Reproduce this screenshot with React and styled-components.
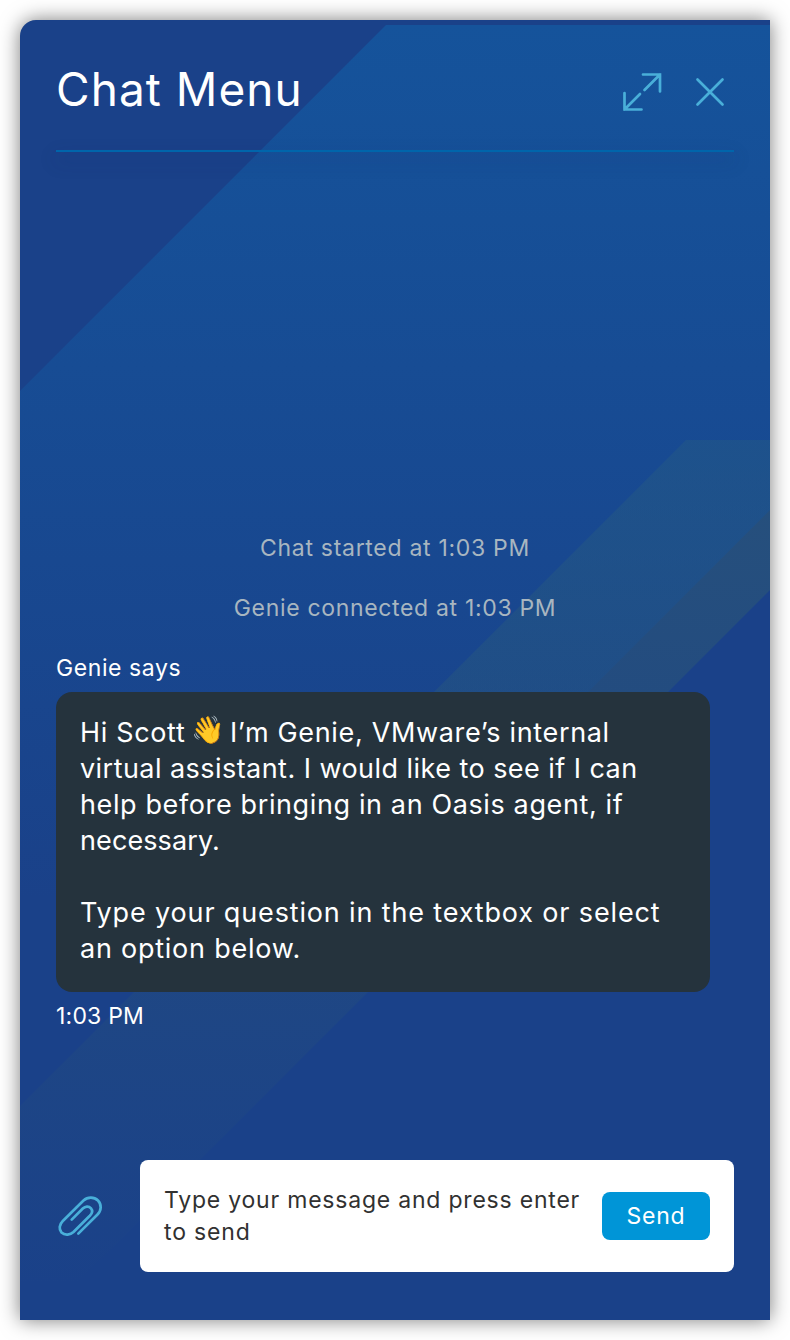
import React from "react";
import styled, { createGlobalStyle } from "styled-components";

const GlobalStyle = createGlobalStyle`
  *, *::before, *::after { box-sizing: border-box; }
  body { margin: 0; background: #fff; font-family: Inter, "Liberation Sans", sans-serif; }
  h1, p { margin: 0; font-weight: inherit; }
`;

const Page = styled.main`
  width: 790px;
  height: 1340px;
  padding: 20px;
  overflow: hidden;
`;

const Panel = styled.section`
  position: relative;
  isolation: isolate;
  display: flex;
  flex-direction: column;
  height: 1300px;
  padding: 0 36px 48px;
  border-radius: 16px 0 0 0;
  background: #1a4189;
  box-shadow: 0 0 20px rgba(0, 0, 0, 0.52);
  color: #fff;
`;

const Backdrop = styled.svg`
  position: absolute;
  inset: 0;
  z-index: -1;
`;

const Header = styled.header`
  display: flex;
  align-items: center;
  height: 130px;
  padding-top: 10px;
`;

const Divider = styled.div`
  height: 2px;
  background: #0065ab;
  box-shadow: 0 8px 18px 2px rgba(24, 44, 100, 0.17);
`;

const Title = styled.h1`
  flex: 1;
  font-size: 46px;
  font-weight: 400;
  line-height: 56px;
  padding-bottom: 2px;
  white-space: nowrap;
`;

const IconButton = styled.button`
  display: flex;
  padding: 0;
  border: 0;
  background: none;
  color: #49afd9;
`;

const HeaderActions = styled.div`
  display: flex;
  align-items: center;
  gap: 32px;
  padding: 4px 8px 0 0;
`;

const Log = styled.div`
  flex: 1;
  display: flex;
  flex-direction: column;
  padding-top: 378px;
`;

const Line = styled.span`
  display: block;
  width: max-content;
  white-space: nowrap;
  letter-spacing: ${(p) => p.$track || 0}px;
`;

const Emoji = styled.span`
  display: inline-block;
  height: 36px;
  margin: 0 -3px 0 -3px;
  line-height: 30px;
  letter-spacing: 0;
  vertical-align: top;
`;

const Notice = styled.p`
  display: flex;
  justify-content: center;
  height: 60px;
  color: #a8b6c0;
  font-size: 23px;
  line-height: 36px;
`;

const Meta = styled.p`
  font-size: 23px;
  line-height: 36px;
`;

const Bubble = styled.div`
  width: 654px;
  height: 300px;
  margin: 6px 0;
  padding: 23px 24px;
  border-radius: 16px;
  background: #25333d;
  font-size: 27px;
  line-height: 36px;
`;

const Paragraph = styled.p`
  & + & { margin-top: 36px; }
`;

const Composer = styled.footer`
  display: flex;
  align-items: center;
  justify-content: space-between;
`;

const Field = styled.div`
  display: flex;
  align-items: center;
  justify-content: space-between;
  width: 594px;
  height: 112px;
  padding: 0 24px;
  border-radius: 8px;
  background: #fff;
`;

const Placeholder = styled.p`
  color: #313131;
  font-size: 23px;
  line-height: 32px;
`;

const SendButton = styled.button`
  display: flex;
  justify-content: center;
  width: 108px;
  height: 48px;
  padding: 0;
  border: 0;
  border-radius: 8px;
  background: #0095d7;
  color: #fff;
  font: 400 23px/48px Inter, "Liberation Sans", sans-serif;
`;

function Stripes() {
  return (
    <Backdrop width="750" height="1300" viewBox="20 20 750 1300" aria-hidden="true">
      <defs>
        <linearGradient id="blueBand" gradientUnits="userSpaceOnUse" x1="0" y1="25" x2="0" y2="900">
          <stop offset="0" stopColor="#15539b" />
          <stop offset="1" stopColor="#15539b" stopOpacity="0" />
        </linearGradient>
        <linearGradient id="oliveBand" gradientUnits="userSpaceOnUse" x1="0" y1="440" x2="0" y2="1290">
          <stop offset="0" stopColor="#508250" stopOpacity="0.24" />
          <stop offset="1" stopColor="#508250" stopOpacity="0" />
        </linearGradient>
      </defs>
      <path d="M686 440H770V590L70 1290H20V1106Z" fill="url(#oliveBand)" />
      <path d="M386 25H770V510L20 1260V391Z" fill="url(#blueBand)" />
    </Backdrop>
  );
}

export default function App() {
  return (
    <Page>
      <GlobalStyle />
      <Panel>
        <Stripes />
        <Header>
          <Title><Line $track={1.05}>Chat Menu</Line></Title>
          <HeaderActions>
            <IconButton aria-label="Expand">
              <svg width="40" height="40" viewBox="0 0 40 40" fill="none" stroke="currentColor" strokeWidth="2.7" strokeLinecap="round">
                <path d="M21 2.5H38V19.5M38 2.5L22.5 18M2.5 21V37.5H19.5M2.5 37.5L18 22" />
              </svg>
            </IconButton>
            <IconButton aria-label="Close">
              <svg width="32" height="40" viewBox="0 0 32 40" fill="none" stroke="currentColor" strokeWidth="2.7" strokeLinecap="round">
                <path d="M3.5 7.5L28.5 32.5M28.5 7.5L3.5 32.5" />
              </svg>
            </IconButton>
          </HeaderActions>
        </Header>
        <Divider />
        <Log>
          <Notice><Line $track={0.7}>Chat started at 1:03 PM</Line></Notice>
          <Notice><Line $track={0.67}>Genie connected at 1:03 PM</Line></Notice>
          <Meta><Line $track={0.58}>Genie says</Line></Meta>
          <Bubble>
            <Paragraph>
              <Line $track={0.66}>Hi Scott <Emoji>👋</Emoji> I’m Genie, VMware’s internal</Line>
              <Line $track={0.45}>virtual assistant. I would like to see if I can</Line>
              <Line $track={0.62}>help before bringing in an Oasis agent, if</Line>
              <Line $track={0.1}>necessary.</Line>
            </Paragraph>
            <Paragraph>
              <Line $track={0.85}>Type your question in the textbox or select</Line>
              <Line $track={0.76}>an option below.</Line>
            </Paragraph>
          </Bubble>
          <Meta><Line $track={0.2}>1:03 PM</Line></Meta>
        </Log>
        <Composer>
          <IconButton aria-label="Attach a file">
            <svg width="48" height="48" viewBox="56 1192 48 48" fill="none" stroke="currentColor" strokeWidth="2.7" strokeLinecap="round">
              <path d="M78.3 1233.6L97.5 1214.5C101.500 1210.500 101.800 1204.500 98 1200.500C94 1196.500 87.500 1196.700 83.500 1200.500L62.800 1221C59.300 1224.500 58.600 1229.500 61.500 1232.500C65 1235.800 70.500 1234.800 73.500 1232L89.800 1215.800C92.200 1213.300 92.800 1210.500 91 1208.300C88.700 1205.700 85.200 1206.200 82.800 1208.500L71.700 1219.600" />
            </svg>
          </IconButton>
          <Field>
            <Placeholder>
              <Line $track={0.79}>Type your message and press enter</Line>
              <Line $track={0.85}>to send</Line>
            </Placeholder>
            <SendButton><Line $track={0.8}>Send</Line></SendButton>
          </Field>
        </Composer>
      </Panel>
    </Page>
  );
}
